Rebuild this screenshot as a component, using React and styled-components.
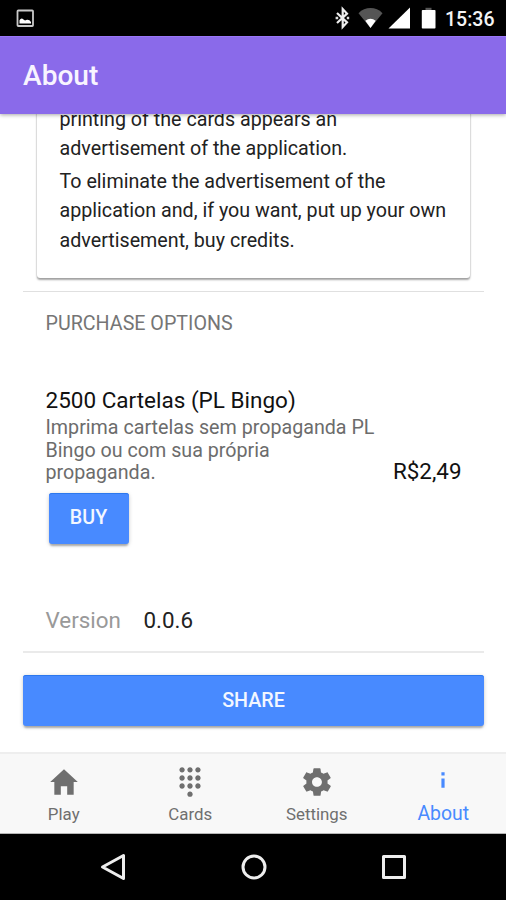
import React from "react";
import styled, { createGlobalStyle } from "styled-components";
import {
  IoMdHome,
  IoMdKeypad,
  IoMdSettings,
  IoMdInformation,
} from "react-icons/io";

const GlobalStyle = createGlobalStyle`
  * {
    box-sizing: border-box;
  }
  body {
    margin: 0;
    font-family: Roboto, "Liberation Sans", sans-serif;
    background-color: #fff;
  }
  p, h1, h2, h3 {
    margin: 0;
    font-weight: 400;
  }
`;

const Phone = styled.div`
  width: 506px;
  height: 900px;
  display: flex;
  flex-direction: column;
  overflow: hidden;
  color: #000;
`;

const StatusBar = styled.div`
  flex: none;
  height: 36px;
  padding: 0 11px 0 16px;
  background-color: #000;
  display: flex;
  align-items: center;
  justify-content: space-between;
`;

const StatusIcons = styled.div`
  display: flex;
  align-items: center;
`;

const StatusSvg = styled.svg`
  display: block;
  margin-right: ${(props) => props.$gap || 0}px;
`;

const Clock = styled.span`
  width: 50px;
  color: #f4f4f4;
  font-size: 19.5px;
  font-weight: 500;
  line-height: 24px;
  margin-top: 3px;
  white-space: nowrap;
`;

const Header = styled.header`
  flex: none;
  height: 78px;
  padding-left: 23px;
  display: flex;
  align-items: center;
  background-color: #8a6aea;
  border-top: 1px solid #9a75f8;
  box-shadow: 0 1px 4px rgba(0, 0, 0, 0.35);
  z-index: 1;
`;

const Title = styled.h1`
  color: #f8f4ff;
  font-size: 28.1px;
  font-weight: 500;
`;

const Content = styled.main`
  flex: 1;
  min-height: 0;
  padding: 0 22px 0 23px;
  overflow: hidden;
`;

const Card = styled.section`
  height: 177px;
  margin: -13px 14px 13px;
  padding: 3.5px 20px 0 22.5px;
  border-radius: 3px;
  box-shadow: 0 2px 2px rgba(0, 0, 0, 0.34), 0 0 2px rgba(0, 0, 0, 0.2);
`;

const CardText = styled.p`
  margin-bottom: 3px;
  color: #222;
  font-size: 19.68px;
  line-height: 29.5px;
  white-space: nowrap;
`;

const Divider = styled.div`
  height: ${(props) => props.$size || 1}px;
  background-color: ${(props) => props.$color || "#e0e0e0"};
`;

const SectionTitle = styled.h2`
  margin: 20px 0 0 22.5px;
  color: #757575;
  font-size: 19.68px;
  line-height: 24px;
`;

const Product = styled.div`
  margin-top: 51px;
  padding: 0 22.5px;
  display: flex;
  align-items: flex-end;
  justify-content: space-between;
`;

const ProductName = styled.h3`
  margin-bottom: 3px;
  font-size: 22.5px;
  line-height: 27px;
  color: #111;
  white-space: nowrap;
`;

const Description = styled.p`
  width: 336px;
  font-size: 19.68px;
  line-height: 22.6px;
  color: #6c6c6c;
`;

const Price = styled.span`
  margin-bottom: 2px;
  font-size: 22.4px;
  line-height: 24px;
  color: #111;
`;

const Button = styled.button`
  display: block;
  width: ${(props) => props.$width || "100%"};
  height: 51px;
  margin: ${(props) => props.$margin || 0};
  padding: 0 0 1px;
  border: none;
  border-radius: 3px;
  background-color: #488aff;
  color: #f3f7ff;
  font-family: inherit;
  font-size: 19.68px;
  font-weight: 500;
  box-shadow: 0 3px 2px -1px rgba(0, 0, 0, 0.25), 0 1px 4px rgba(0, 0, 0, 0.2),
    inset 0 1px 0 #2c78ee;
`;

const Version = styled.div`
  margin-top: 62px;
  height: 45px;
  padding-left: 22.5px;
  display: flex;
  font-size: 22.4px;
  line-height: 28px;
  color: #222;
`;

const VersionLabel = styled.span`
  width: 98px;
  color: #999;
`;

const TabBar = styled.nav`
  flex: none;
  height: 82px;
  display: grid;
  grid-template-columns: repeat(4, 1fr);
  background-color: #f8f8f8;
  border-top: 2px solid #eee;
  border-bottom: 1px solid #b5b5b5;
`;

const Tab = styled.a`
  display: flex;
  flex-direction: column;
  align-items: center;
  padding: 11px 0 0 1px;
  color: ${(props) => (props.$active ? "#488aff" : "#6f6f6f")};

  svg {
    display: block;
    width: 34px;
    height: 34px;
    margin-top: ${(props) => (props.$active ? "-2px" : "0")};
  }
`;

const TabLabel = styled.span`
  margin-top: ${(props) => (props.$active ? "6px" : "4px")};
  font-size: ${(props) => (props.$active ? "19.4px" : "16.87px")};
  line-height: 22px;
`;

const NavBar = styled.div`
  flex: none;
  height: 66px;
  padding-left: 2px;
  background-color: #000;
  display: flex;
  justify-content: center;
  align-items: center;
  gap: 112px;

  svg {
    display: block;
    fill: none;
    stroke: #eee;
    stroke-width: 3;
    stroke-linejoin: round;
  }
`;

const tabs = [
  { label: "Play", icon: IoMdHome },
  { label: "Cards", icon: IoMdKeypad },
  { label: "Settings", icon: IoMdSettings },
  { label: "About", icon: IoMdInformation, active: true },
];

class App extends React.Component {
  renderStatusBar = () => (
    <StatusBar>
      <StatusSvg width="19" height="19" viewBox="0 0 19 19">
        <rect
          x="1.5"
          y="1.5"
          width="15.5"
          height="15.5"
          rx="0.8"
          fill="none"
          stroke="#c9c9c9"
          strokeWidth="1.8"
        />
        <path
          d="M3.5 14.5v-3.3q1.8-3 4-.7l1.5 1 2-.7q2.5-.3 4 2.2v1.5z"
          fill="#fff"
        />
      </StatusSvg>
      <StatusIcons>
        <StatusSvg $gap={7} width="16" height="24" viewBox="0 0 16 24">
          <path
            d="M2 7l10 9.4-4.3 4.6V3l4.300 4.600L2 17"
            fill="none"
            stroke="#eee"
            strokeWidth="2.2"
          />
          <path
            d="M.6 10.7h2.600v2.600H.6zM11.800 10.700h2.400v2.600h-2.400z"
            fill="#ddd"
          />
        </StatusSvg>
        <StatusSvg $gap={5} width="25" height="24" viewBox="0 0 25 24">
          <path d="M.5 7.200C7 .4 18 .4 24.500 7.200L12.500 22z" fill="#555" />
          <path d="M7.300 14.800q5.200-4 10.400 0L12.500 22z" fill="#fff" />
        </StatusSvg>
        <StatusSvg $gap={10} width="23" height="24" viewBox="0 0 23 24">
          <path d="M.5 22.500L22 1.500v21z" fill="#fff" />
        </StatusSvg>
        <StatusSvg $gap={9} width="15" height="24" viewBox="0 0 15 24">
          <path d="M4.500 1.800h6v2.500h-6z" fill="#555" />
          <rect x="0.8" y="4" width="13.7" height="18.5" rx="0.8" fill="#fff" />
        </StatusSvg>
        <Clock>15:36</Clock>
      </StatusIcons>
    </StatusBar>
  );

  render() {
    return (
      <Phone>
        <GlobalStyle />
        {this.renderStatusBar()}
        <Header>
          <Title>About</Title>
        </Header>

        <Content>
          <Card>
            <CardText>
              printing of the cards appears an
              <br />
              advertisement of the application.
            </CardText>
            <CardText>
              To eliminate the advertisement of the
              <br />
              application and, if you want, put up your own
              <br />
              advertisement, buy credits.
            </CardText>
          </Card>
          <Divider />
          <SectionTitle>PURCHASE OPTIONS</SectionTitle>

          <Product>
            <div>
              <ProductName>2500 Cartelas (PL Bingo)</ProductName>
              <Description>
                Imprima cartelas sem propaganda PL Bingo ou com sua própria
                propaganda.
              </Description>
            </div>
            <Price>R$2,49</Price>
          </Product>
          <Button $width="80px" $margin="8px 0 0 25.5px">
            BUY
          </Button>

          <Version>
            <VersionLabel>Version</VersionLabel>
            <span>0.0.6</span>
          </Version>
          <Divider $size={2} $color="#eaeaea" />
          <Button $margin="22.5px 0 0">SHARE</Button>
        </Content>

        <TabBar>
          {tabs.map(({ label, icon: Icon, active }) => (
            <Tab key={label} $active={active}>
              <Icon />
              <TabLabel $active={active}>{label}</TabLabel>
            </Tab>
          ))}
        </TabBar>

        <NavBar>
          <svg width="28" height="28" viewBox="0 0 28 28">
            <path d="M2.5 14L23.5 2.5v23z" />
          </svg>
          <svg width="28" height="28" viewBox="0 0 28 28">
            <circle cx="14" cy="14" r="11" />
          </svg>
          <svg width="28" height="28" viewBox="0 0 28 28">
            <rect x="3.5" y="3.5" width="21" height="21" />
          </svg>
        </NavBar>
      </Phone>
    );
  }
}

export default App;
